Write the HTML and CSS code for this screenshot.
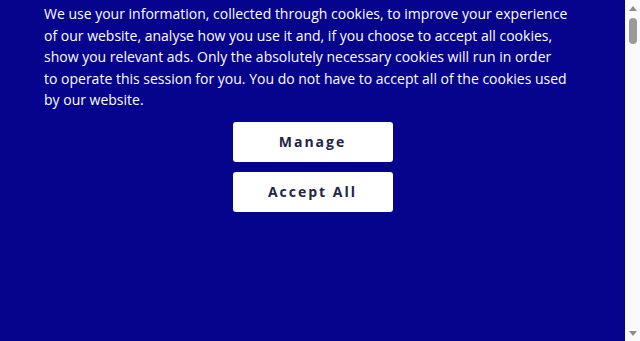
FILE: index.html
```html
<!DOCTYPE html>
<html>
<head>
<meta charset="utf-8">
<link rel="stylesheet" href="styles.css">
</head>
<body>
<div class="page">
  <div class="banner">
    <p class="msg">We use your information, collected through cookies, to improve your experience of our website, analyse how you use it and, if you choose to accept all cookies, show you relevant ads. Only the absolutely necessary cookies will run in order to&nbsp;operate this session for you. You do not have to accept all of the cookies used by our website.</p>
    <div class="actions">
      <button class="btn">Manage</button>
      <button class="btn">Accept All</button>
    </div>
  </div>
  <div class="scrollbar">
    <div class="sb-btn">
      <svg width="8" height="5" viewBox="0 0 8 5"><polygon points="0,5 8,5 4,0" fill="#8c8c8c"/></svg>
    </div>
    <div class="sb-track"><div class="sb-thumb"></div></div>
    <div class="sb-btn">
      <svg width="8" height="5" viewBox="0 0 8 5"><polygon points="0,0 8,0 4,5" fill="#8c8c8c"/></svg>
    </div>
  </div>
</div>
</body>
</html>
```
FILE: styles.css
```css
html, body {
  margin: 0;
  padding: 0;
}
body {
  background: #06038d;
  font-family: "Open Sans", "DejaVu Sans", sans-serif;
  overflow: hidden;
}
.page {
  display: grid;
  grid-template-columns: 1fr 15px;
  height: 100vh;
}
.banner {
  padding: 3px 44px 0 44px;
  min-width: 0;
}
.msg {
  margin: 0;
  max-width: 526px;
  color: #ffffff;
  font-size: 14px;
  line-height: 21.5px;
}
.actions {
  display: flex;
  flex-direction: column;
  align-items: center;
  gap: 10px;
  margin-top: 11px;
}
.btn {
  width: 160px;
  height: 40px;
  background: #ffffff;
  border: none;
  border-radius: 3px;
  color: #22244a;
  font-family: "Open Sans", "DejaVu Sans", sans-serif;
  font-size: 14px;
  font-weight: 700;
  letter-spacing: 2px;
  padding: 0;
}
.scrollbar {
  display: flex;
  flex-direction: column;
  background: #fafafa;
}
.sb-btn {
  height: 16px;
  display: flex;
  align-items: center;
  justify-content: center;
}
.sb-btn svg {
  display: block;
}
.sb-track {
  flex: 1;
  display: flex;
  flex-direction: column;
  align-items: center;
  padding-top: 2px;
}
.sb-thumb {
  width: 8px;
  height: 26px;
  border-radius: 4px;
  background: #9a9a9a;
}
```
